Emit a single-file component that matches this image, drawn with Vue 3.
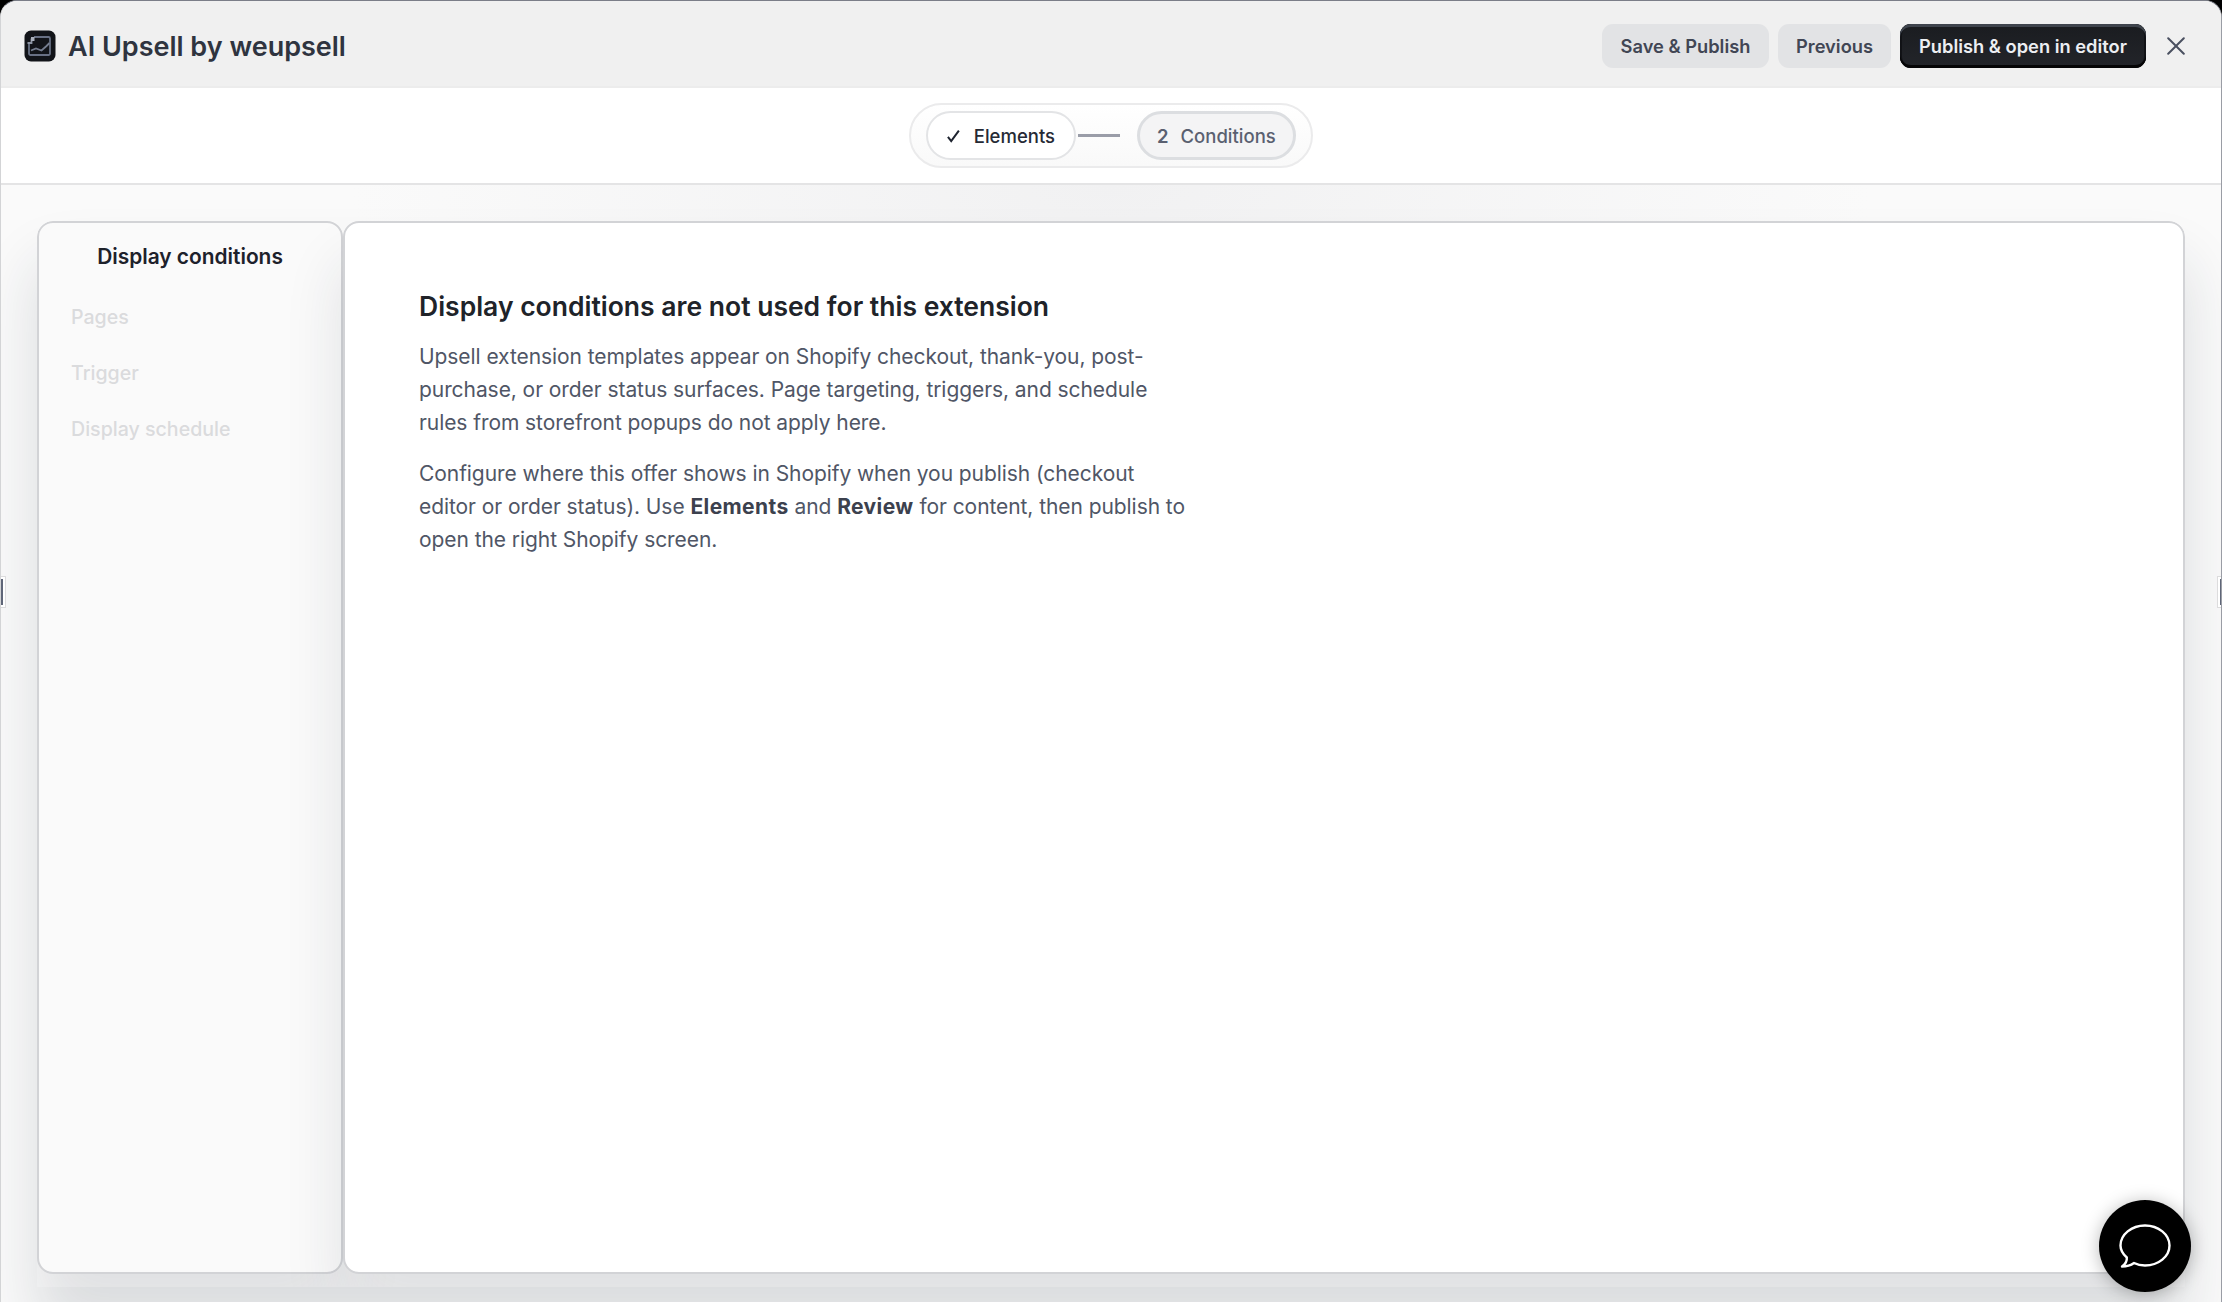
<script setup>
import { ref } from "vue";

const conditions = ["Pages", "Trigger", "Display schedule"];
const activeStep = ref(2);
</script>

<template>
  <div class="modal">
    <header class="topbar">
      <svg class="logo" viewBox="0 0 32 32" width="32" height="32">
        <rect x="0.5" y="0.5" width="31" height="31" rx="6.5" fill="#121419" />
        <path d="M10 7h14.500a1.500 1.500 0 0 1 1.500 1.500v15a1.500 1.500 0 0 1-1.500 1.500H6.500a1.500 1.500 0 0 1-1.500-1.500V14" fill="none" stroke="#687084" stroke-width="1.800" />
        <path d="M7 20.500l5-2 5.500 2 5-4.500 3-3" fill="none" stroke="#747c8e" stroke-width="1.800" />
        <path d="M3.500 13h4V8.500" fill="none" stroke="#8d94a3" stroke-width="1.800" />
        <rect x="7" y="7" width="3.500" height="4" fill="#a9afbb" />
      </svg>
      <h1>AI Upsell by weupsell</h1>
      <div class="actions">
        <button class="btn save">Save &amp; Publish</button>
        <button class="btn prev">Previous</button>
        <button class="btn primary">Publish &amp; open in editor</button>
      </div>
      <svg class="close" viewBox="0 0 18 18" width="18" height="18">
        <path d="M1.200 1.200l15.600 15.600M16.800 1.200L1.200 16.800" fill="none" stroke="#4a5060" stroke-width="2" stroke-linecap="round" />
      </svg>
    </header>

    <nav class="steps">
      <div class="stepper">
        <button class="step done" @click="activeStep = 1">
          <svg viewBox="0 0 14 14" width="14" height="14">
            <path d="M1 8l3.600 4.500L13 1.200" fill="none" stroke="#1f2430" stroke-width="2.200" />
          </svg>
          <span>Elements</span>
        </button>
        <i class="line"></i>
        <button class="step" :class="{ current: activeStep === 2 }" @click="activeStep = 2">
          <b>2</b>
          <span>Conditions</span>
        </button>
      </div>
    </nav>

    <main class="workspace">
      <div class="panels">
        <aside class="sidebar">
          <h2>Display conditions</h2>
          <ul>
            <li v-for="item in conditions" :key="item">{{ item }}</li>
          </ul>
        </aside>
        <section class="content">
          <h3>Display conditions are not used for this extension</h3>
          <p>
            Upsell extension templates appear on Shopify checkout, thank-you, post-<br />
            purchase, or order status surfaces. Page targeting, triggers, and schedule<br />
            rules from storefront popups do not apply here.
          </p>
          <p>
            Configure where this offer shows in Shopify when you publish (checkout<br />
            editor or order status). Use <strong>Elements</strong> and <strong>Review</strong> for content, then publish to<br />
            open the right Shopify screen.
          </p>
        </section>
      </div>
    </main>

    <i class="handle left"></i>
    <i class="handle right"></i>
    <button class="chat">
      <svg viewBox="0 0 52 44" width="52" height="44">
        <path d="M7.800 33.500C3.800 30 1.500 26 1.500 21.500 1.500 10.500 12.500 1.500 26 1.500s24.500 9 24.500 20-11 20-24.500 20c-4 0-7.500-.700-11-2.500-3.500 2.500-7.500 3.500-12 3.500 3.500-2.500 5.200-5 4.800-9z" fill="none" stroke="#fff" stroke-width="2.400" stroke-linejoin="round" />
      </svg>
    </button>
  </div>
</template>

<style>
body {
  margin: 0;
  background: #000;
}
</style>

<style scoped>
* {
  box-sizing: border-box;
}

.modal {
  position: relative;
  display: flex;
  flex-direction: column;
  height: 1302px;
  overflow: hidden;
  border: 1px solid #d3d4d6;
  border-top-color: #7b7e88;
  border-right-color: #9a9da5;
  border-bottom: 0;
  border-radius: 17px 17px 0 0;
  background: #fafafa;
  font-family: Inter, "Liberation Sans", sans-serif;
}

button {
  font-family: inherit;
  cursor: pointer;
}

h1, h2, h3, p, ul {
  margin: 0;
  padding: 0;
}

.topbar {
  display: flex;
  flex: none;
  align-items: center;
  height: 87px;
  padding: 5px 36px 0 23px;
  border-bottom: 2px solid #ececec;
  background: #f0f0f0;
}

h1 {
  margin-left: 12px;
  font-size: 27px;
  font-weight: 600;
  color: #2f343f;
}

.actions {
  display: flex;
  gap: 9px;
  margin-left: auto;
}

.btn {
  height: 44px;
  padding: 0;
  border: 0;
  border-radius: 11px;
  background: #e2e3e5;
  color: #414654;
  font-size: 18.300px;
  font-weight: 600;
}

.save {
  width: 167px;
}

.prev {
  width: 113px;
}

.primary {
  width: 246px;
  background: linear-gradient(#1a1c20, #23252a);
  box-shadow: inset 0 3px 0 #3f444d, inset 0 -3px 0 #050506, inset 0 0 0 2px #111216;
  color: #eceef2;
}

.close {
  margin-left: 21px;
}

.steps {
  display: flex;
  flex: none;
  align-items: center;
  justify-content: center;
  height: 97px;
  border-bottom: 2px solid #e4e4e5;
  background: #fff;
}

.stepper {
  display: flex;
  align-items: center;
  width: 404px;
  height: 65px;
  padding: 0 15px;
  border: 2px solid #ebebec;
  border-radius: 33px;
  background: linear-gradient(#fff, #f9f9f9);
}

.step {
  display: flex;
  flex: none;
  align-items: center;
  height: 49px;
  padding: 0 19px;
  border: 2px solid #e3e4e6;
  border-radius: 25px;
  background: #fff;
  color: #252a35;
  font-size: 18.500px;
  font-weight: 500;
}

.done {
  width: 150px;
  gap: 14px;
}

.current {
  width: 159px;
  gap: 12px;
  padding-left: 17px;
  border: 3px solid #dcdee1;
  background: #f4f4f5;
  color: #5a6070;
}

.step b {
  font-weight: 600;
}

.line {
  flex: none;
  width: 42px;
  height: 3px;
  margin: 0 17px 0 2px;
  background: #9a9da8;
}

.workspace {
  flex: 1;
  padding: 36px 36px 15px;
  background: radial-gradient(ellipse 760px 320px at 50% 0, #f1f1f2, #fafafa);
}

.panels {
  display: flex;
  height: 1066px;
  padding-bottom: 13px;
  overflow: hidden;
  border-radius: 16px 16px 0 0;
  background: #fafafa;
  box-shadow: 0 42px 60px rgba(30, 41, 59, 0.14);
}

.sidebar {
  width: 306px;
  border: 2px solid #d2d3d6;
  border-radius: 16px;
  background: #fafafa;
  box-shadow: 0 42px 60px rgba(30, 41, 59, 0.12);
}

.content {
  flex: 1;
  padding: 66px 74px;
  border: 2px solid #d2d3d6;
  border-radius: 16px;
  background: #fff;
  box-shadow: 0 42px 60px rgba(30, 41, 59, 0.12);
}

h2 {
  margin-top: 21px;
  text-align: center;
  font-size: 20.900px;
  font-weight: 600;
  line-height: 26px;
  color: #1d212b;
}

ul {
  margin-top: 19px;
  list-style: none;
}

li {
  padding-left: 32px;
  font-size: 19.600px;
  font-weight: 500;
  line-height: 56.200px;
  color: #dadbdd;
}

h3 {
  font-size: 26.500px;
  font-weight: 600;
  line-height: 34px;
  color: #202329;
}

p {
  margin-top: 17px;
  white-space: nowrap;
  font-size: 21px;
  line-height: 33.200px;
  letter-spacing: -0.070px;
  color: #505666;
}

strong {
  font-weight: 700;
  letter-spacing: 0.400px;
  color: #3c414e;
}

.handle {
  position: absolute;
  top: 576px;
  width: 5px;
  height: 30px;
  border: 2px solid #fff;
  background: #5f6678;
  outline: 1px solid #dcdcdd;
}

.left {
  left: -1px;
  border-left: 0;
}

.right {
  right: -1px;
  width: 4px;
  border-right: 0;
}

.chat {
  position: absolute;
  right: 30px;
  top: 1199px;
  display: flex;
  align-items: center;
  justify-content: center;
  width: 92px;
  height: 92px;
  padding: 0;
  border: 0;
  border-radius: 50%;
  background: #000;
  box-shadow: 0 2px 18px rgba(0, 0, 0, 0.28);
}
</style>
